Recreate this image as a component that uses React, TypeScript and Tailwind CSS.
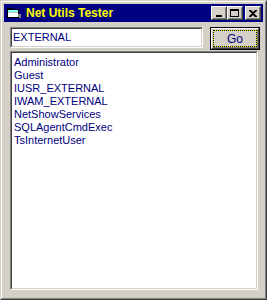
import React from "react";

const items = [
  "Administrator",
  "Guest",
  "IUSR_EXTERNAL",
  "IWAM_EXTERNAL",
  "NetShowServices",
  "SQLAgentCmdExec",
  "TsInternetUser",
];

function TitleBtn({ children }: { children: React.ReactNode }) {
  return (
    <div className="w-[16px] h-[14px] bg-[#d4d0c8] border border-t-white border-l-white border-b-[#404040] border-r-[#404040]">
      <div className="w-full h-full border border-t-[#d4d0c8] border-l-[#d4d0c8] border-b-[#808080] border-r-[#808080] flex items-center justify-center">
        {children}
      </div>
    </div>
  );
}

export default function App() {
  return (
    <div
      className="w-[267px] h-[300px] bg-[#d4d0c8] border border-t-[#d4d0c8] border-l-[#d4d0c8] border-b-[#404040] border-r-[#404040]"
      style={{ fontFamily: '"Liberation Sans", Arial, sans-serif' }}
    >
      <div className="w-full h-full border border-t-white border-l-white border-b-[#808080] border-r-[#808080] p-[2px] flex flex-col">
        {/* Title bar */}
        <div className="h-[18px] bg-[#000080] flex items-center pl-[2px] pr-[2px] shrink-0">
          <svg width="16" height="16" viewBox="0 0 16 16" className="shrink-0">
            <rect x="1" y="3" width="6" height="2" fill="#000" />
            <rect x="1" y="4" width="12" height="9" fill="#000" />
            <rect x="2" y="5" width="10" height="7" fill="#ffffff" />
            <rect x="2" y="5" width="10" height="2" fill="#80ffff" />
            <rect x="2" y="7" width="10" height="1" fill="#c0c0c0" />
            <rect x="12" y="9" width="3" height="3" fill="#808080" />
            <rect x="13" y="10" width="2" height="3" fill="#808080" />
          </svg>
          <span className="ml-[4px] text-[12px] font-bold text-[#ffff00] leading-none whitespace-nowrap">
            Net Utils Tester
          </span>
          <div className="flex-1" />
          <TitleBtn>
            <div className="w-[6px] h-[2px] bg-black mt-[6px] -ml-[1px]" />
          </TitleBtn>
          <TitleBtn>
            <div className="w-[9px] h-[8px] border border-black border-t-2 -ml-[1px]" />
          </TitleBtn>
          <div className="w-[2px]" />
          <TitleBtn>
            <svg width="8" height="7" viewBox="0 0 8 7" className="-ml-[1px]">
              <path d="M0 0h2l2 2 2-2h2v1L5 3.5 8 6v1H6L4 5 2 7H0V6l3-2.5L0 1z" fill="#000" />
            </svg>
          </TitleBtn>
        </div>

        {/* Content */}
        <div className="flex-1 flex flex-col pl-[6px] pt-[5px] pb-[6px]">
          <div className="flex items-start h-[23px] shrink-0">
            <div className="w-[193px] h-[21px] bg-white border border-t-[#808080] border-l-[#808080] border-b-white border-r-white">
              <div className="w-full h-full border border-t-[#404040] border-l-[#404040] border-b-[#d4d0c8] border-r-[#d4d0c8] flex items-center pl-[1px]">
                <span className="text-[11px] text-[#000080] leading-none">EXTERNAL</span>
              </div>
            </div>
            <div className="ml-[7px] w-[50px] h-[23px] border border-black bg-[#d4d0c8]">
              <div className="w-full h-full border border-t-white border-l-white border-b-[#404040] border-r-[#404040]">
                <div className="relative w-full h-full border border-t-[#d4d0c8] border-l-[#d4d0c8] border-b-[#808080] border-r-[#808080] flex items-center justify-center">
                  <div className="absolute inset-0 border border-[#ffff00]" />
                  <div className="absolute inset-0 border border-dotted border-black" />
                  <span className="relative text-[12px] text-[#000080] leading-none">Go</span>
                </div>
              </div>
            </div>
          </div>

          <div className="mt-[1px] w-[248px] flex-1 bg-white border border-t-[#808080] border-l-[#808080] border-b-white border-r-white">
            <div className="w-full h-full border border-t-[#404040] border-l-[#404040] border-b-[#d4d0c8] border-r-[#d4d0c8] pl-[2px] pt-[3px]">
              {items.map((it) => (
                <div key={it} className="h-[13px] text-[11px] leading-[13px] text-[#000080] whitespace-nowrap">
                  {it}
                </div>
              ))}
            </div>
          </div>
        </div>
      </div>
    </div>
  );
}
